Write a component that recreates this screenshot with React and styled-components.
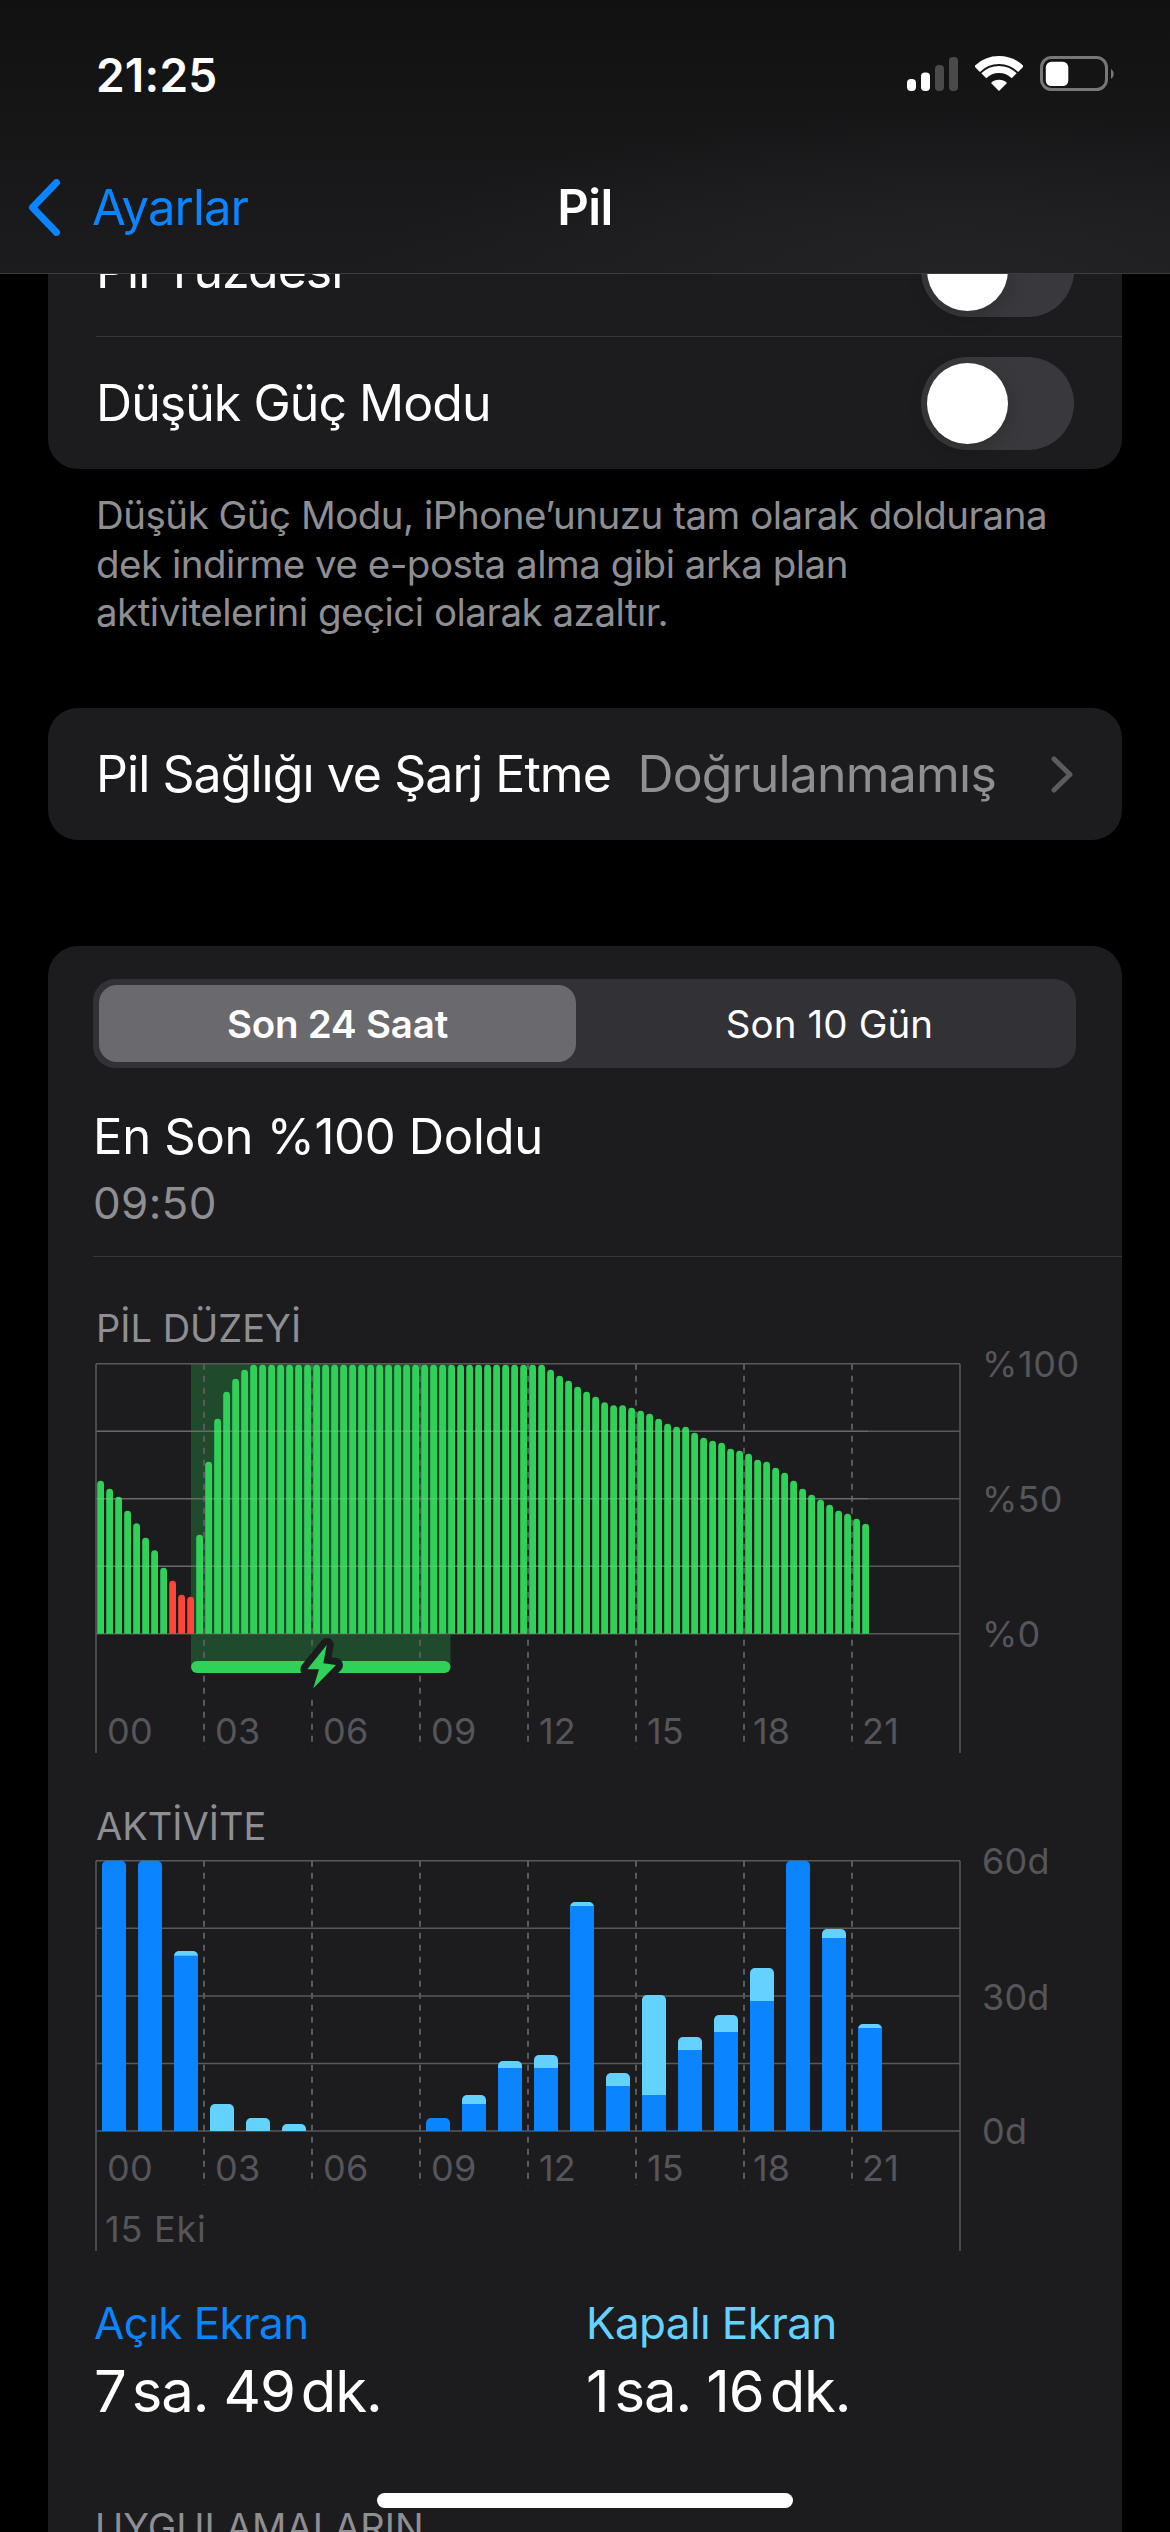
import React from "react";
import styled, { createGlobalStyle } from "styled-components";

const Global = createGlobalStyle`
  html, body { margin: 0; padding: 0; background: #000; }
  * { box-sizing: border-box; }
`;

const Screen = styled.div`
  position: relative;
  width: 1170px;
  height: 2532px;
  overflow: hidden;
  background: #000;
  color: #fff;
  font-family: Inter, "Liberation Sans", sans-serif;
`;

const Header = styled.header`
  position: absolute;
  top: 0;
  left: 0;
  right: 0;
  height: 274px;
  z-index: 2;
  display: flex;
  flex-direction: column;
  background: radial-gradient(600px 160px at 82% 100%, #232325 0%, rgba(35, 35, 37, 0) 100%),
    linear-gradient(180deg, #111112 0%, #1c1c1e 100%);
  border-bottom: 1px solid #3c3c3f;
`;

const StatusBar = styled.div`
  height: 149px;
  padding: 0 55px 0 96px;
  display: flex;
  align-items: center;
  justify-content: space-between;
`;

const Clock = styled.span`
  font-size: 46px;
  font-weight: 600;
  letter-spacing: 0.2px;
  line-height: 1;
`;

const StatusIcons = styled.div`
  display: flex;
  align-items: center;
  gap: 17px;
  margin-top: -2px;
`;

const NavRow = styled.nav`
  height: 116px;
  display: grid;
  grid-template-columns: 1fr auto 1fr;
  align-items: center;
`;

const Back = styled.div`
  display: flex;
  align-items: center;
  gap: 31px;
  padding-left: 28px;
  color: #0a84ff;
  font-size: 49px;
  letter-spacing: -0.9px;
`;

const NavTitle = styled.h1`
  margin: 0;
  font-size: 49px;
  font-weight: 600;
  letter-spacing: -0.6px;
`;

const Scroller = styled.main`
  padding: 204px 48px 0;
  display: flex;
  flex-direction: column;
`;

const Card = styled.section`
  background: #1c1c1e;
  border-radius: 30px;
`;

const RowText = styled.span`
  font-size: 50px;
  letter-spacing: -0.95px;
  line-height: 60px;
  white-space: nowrap;
`;

const ToggleRowBox = styled.div`
  height: ${(p) => p.$h}px;
  margin-left: 48px;
  padding-right: 48px;
  display: flex;
  align-items: center;
  justify-content: space-between;
  border-top: ${(p) => (p.$sep ? "1.5px solid #38383a" : "none")};
`;

const Toggle = styled.div`
  width: 153px;
  height: 93px;
  padding: 6px;
  border-radius: 47px;
  background: #39393d;
  display: flex;
  align-items: center;
`;

const Knob = styled.div`
  width: 81px;
  height: 81px;
  border-radius: 50%;
  background: #fff;
  box-shadow: 0 6px 20px rgba(0, 0, 0, 0.18);
`;

const Footnote = styled.p`
  margin: 22px 48px 0;
  font-size: 38.5px;
  line-height: 48.5px;
  letter-spacing: -0.5px;
  color: #8e8e93;
  white-space: nowrap;
`;

const HealthCard = styled(Card)`
  margin-top: 71.5px;
  height: 132px;
  padding: 0 49px 0 48px;
  display: flex;
  align-items: center;
  justify-content: space-between;
`;

const HealthEnd = styled.div`
  display: flex;
  align-items: center;
  gap: 55px;
`;

const HealthValue = styled(RowText)`
  color: #8e8e93;
  letter-spacing: -0.8px;
`;

const UsageCard = styled(Card)`
  margin-top: 106px;
  padding-top: 33px;
  border-radius: 30px 30px 0 0;
`;

const Segments = styled.div`
  margin: 0 46px 0 45px;
  height: 89px;
  padding: 6px;
  border-radius: 22px;
  background: #313136;
  display: grid;
  grid-template-columns: 477px 1fr;
  align-items: stretch;
`;

const Segment = styled.div`
  display: flex;
  align-items: center;
  justify-content: center;
  padding-left: ${(p) => (p.$active ? 0 : 13)}px;
  border-radius: 18px;
  font-size: 38.5px;
  letter-spacing: ${(p) => (p.$active ? "-0.2px" : "0.1px")};
  font-weight: ${(p) => (p.$active ? 600 : 400)};
  background: ${(p) => (p.$active ? "#69696e" : "transparent")};
`;

const LastCharge = styled.div`
  margin: 39px 0 0 45px;
  padding-bottom: 26px;
  border-bottom: 1.5px solid #38383a;
  display: flex;
  flex-direction: column;
`;

const LastChargeTitle = styled.span`
  font-size: 49px;
  line-height: 60px;
  letter-spacing: -0.3px;
`;

const LastChargeTime = styled.span`
  margin-top: 9px;
  font-size: 44px;
  line-height: 54px;
  letter-spacing: 0.3px;
  color: #8e8e93;
`;

const ChartTitle = styled.h2`
  margin: ${(p) => p.$top}px 0 0 48px;
  height: 56px;
  font-size: 38px;
  line-height: 56px;
  font-weight: 400;
  letter-spacing: 0;
  color: #8e8e93;
`;

const Plot = styled.svg`
  display: block;
  overflow: visible;
`;

const AxisLabel = styled.text`
  font-family: Inter, "Liberation Sans", sans-serif;
  font-size: 36px;
  fill: #55555a;
  letter-spacing: ${(p) => p.$spacing ?? 0.2}px;
`;

const Stats = styled.div`
  margin: 41px 0 0 46px;
  display: grid;
  grid-template-columns: 492px 1fr;
`;

const Stat = styled.div`
  display: flex;
  flex-direction: column;
  gap: 4px;
`;

const StatLabel = styled.span`
  font-size: 44px;
  line-height: 56px;
  letter-spacing: -0.6px;
  color: ${(p) => p.$color};
`;

const StatValue = styled.span`
  font-size: 58px;
  line-height: 72px;
  letter-spacing: -1.1px;
  white-space: nowrap;
`;

const Unit = styled.span`
  font-size: 58px;
  margin-left: ${(p) => p.$gap}px;
`;

const SectionRow = styled.div`
  margin: 76px 24px 0 47px;
  display: flex;
  align-items: flex-start;
  justify-content: space-between;
`;

const SectionTitle = styled.div`
  font-size: 38px;
  line-height: 48px;
  color: #8e8e93;
`;

const SectionAction = styled.div`
  margin-top: 29px;
  font-size: 38px;
  line-height: 48px;
  color: #0a84ff;
`;

const HomeIndicator = styled.div`
  position: absolute;
  left: 377px;
  top: 2493px;
  width: 416px;
  height: 15px;
  border-radius: 8px;
  background: #fff;
  z-index: 3;
`;

const SignalIcon = () => (
  <svg width="51" height="34" viewBox="0 0 51 34">
    <rect x="0" y="22" width="9" height="12" rx="4" fill="#fff" />
    <rect x="14" y="15.5" width="9" height="18.5" rx="4" fill="#fff" />
    <rect x="28" y="8" width="9" height="26" rx="4" fill="#4a4a4b" />
    <rect x="42" y="0" width="9" height="34" rx="4" fill="#4a4a4b" />
  </svg>
);

const WifiIcon = () => (
  <svg width="48" height="35" viewBox="0 0 48 35">
    <path d="M2.1 13.1A31 31 0 0 1 45.9 13.1" fill="none" stroke="#fff" strokeWidth="8" />
    <path d="M8.8 19.8A21.5 21.5 0 0 1 39.2 19.8" fill="none" stroke="#fff" strokeWidth="7" />
    <path d="M24 35L16 27A11.3 11.3 0 0 1 32 27Z" fill="#fff" />
  </svg>
);

const BatteryIcon = () => (
  <svg width="75" height="35" viewBox="0 0 75 35">
    <rect x="1.5" y="1.5" width="65" height="32" rx="10" fill="none" stroke="#777" strokeWidth="3" />
    <rect x="5.8" y="5.8" width="22.5" height="24.2" rx="5.5" fill="#fff" />
    <path d="M71 13A6 6 0 0 1 71 23Z" fill="#777" />
  </svg>
);

const BackChevron = () => (
  <svg width="33" height="57" viewBox="0 0 33 57">
    <path d="M28.5 3.5L4.5 28.5L28.5 53.5" fill="none" stroke="#0a84ff" strokeWidth="7" strokeLinecap="round" strokeLinejoin="round" />
  </svg>
);

const Disclosure = () => (
  <svg width="22" height="37" viewBox="0 0 22 37">
    <path d="M3 3L19 18.5L3 34" fill="none" stroke="#5c5c60" strokeWidth="5" strokeLinecap="round" strokeLinejoin="round" />
  </svg>
);

const GRID = "#59595c";
const DASHES = [204, 312, 420, 528, 636, 744, 852];

const levelTops = [
  542, 566, 590, 632, 670, 713, 751, 803, 842, 884, 890, 704, 485, 356, 275, 236, 209,
  ...Array(33).fill(194),
  209, 227, 242, 260, 275, 290, 307, 316, 316, 323, 332, 341, 356, 371, 380, 380, 398, 413,
  422, 428, 446, 452, 461, 479, 485, 503, 518, 542, 566, 584, 599, 614, 632, 641, 656, 671,
];

const activity = [
  [212, 212], [212, 212], [483, 497], [942, 1023], [984, 1023], [1002, 1023], null, null, null,
  [984, 984], [915, 942], [813, 834], [795, 834], [336, 348], [849, 888], [615, 915], [741, 780],
  [675, 726], [534, 633], [212, 212], [417, 444], [702, 714],
];

const topRounded = (x, w, top, base, r) =>
  `M${x} ${base}V${top + r}A${r} ${r} 0 0 1 ${x + r} ${top}H${x + w - r}A${r} ${r} 0 0 1 ${x + w} ${top + r}V${base}Z`;

const HOUR_LABELS = [
  ["00", 107], ["03", 215], ["06", 323], ["09", 431], ["12", 539], ["15", 647], ["18", 753], ["21", 862],
];

const GridLines = ({ top, step, axisEnd, dashEnd }) => (
  <g stroke={GRID} strokeWidth="1.5">
    {[0, 1, 2, 3, 4].map((i) => (
      <line key={i} x1="96" x2="960" y1={top + step * i} y2={top + step * i} />
    ))}
    <line x1="96" x2="96" y1={top} y2={axisEnd} />
    <line x1="960" x2="960" y1={top} y2={axisEnd} />
    {DASHES.map((x) => (
      <line key={x} x1={x} x2={x} y1={top} y2={dashEnd} strokeWidth="2" strokeDasharray="6 6" />
    ))}
  </g>
);

const BOLT = "M326.7 1645L307.3 1669.3L319 1669.3L313.3 1688.3L336 1665L323.3 1663.3Z";

const LevelChart = () => {
  const base = 1633.7;
  return (
    <Plot width="1074" height="404" viewBox="48 1356 1074 404">
      <rect x="191" y="1364" width="259.5" height="303" fill="#204a2c" />
      <GridLines top={1363.7} step={67.5} axisEnd={1753} dashEnd={1748} />
      {levelTops.map((t, i) => (
        <path
          key={i}
          d={topRounded(97.2 + 9 * i, 6.8, 1300 + t / 3, base, 3.4)}
          fill={i >= 8 && i <= 10 ? "#ff453a" : "#30d158"}
        />
      ))}
      <g stroke="#fff" strokeOpacity="0.1" strokeWidth="1.5">
        {[1431.2, 1498.7, 1566.2].map((y) => (
          <line key={y} x1="97" x2="868" y1={y} y2={y} />
        ))}
      </g>
      <rect x="191" y="1661" width="259.5" height="12" rx="6" fill="#30d158" />
      <path d={BOLT} fill="#1c1c1e" stroke="#1c1c1e" strokeWidth="14" strokeLinejoin="round" />
      <path d={BOLT} fill="#30d158" />
      {HOUR_LABELS.map(([t, x]) => (
        <AxisLabel key={t} x={x} y="1744">{t}</AxisLabel>
      ))}
      <AxisLabel x="982" y="1376.5" $spacing={0.6}>%100</AxisLabel>
      <AxisLabel x="982" y="1512">%50</AxisLabel>
      <AxisLabel x="982" y="1647">%0</AxisLabel>
    </Plot>
  );
};

const ActivityChart = () => {
  const base = 2131;
  return (
    <Plot width="1074" height="400" viewBox="48 1854 1074 400">
      <GridLines top={1860.7} step={67.6} axisEnd={2251} dashEnd={2185} />
      {activity.map((b, i) => {
        if (!b) return null;
        const x = 102 + 36 * i;
        const top = 1790 + b[0] / 3;
        const split = 1790 + b[1] / 3;
        const solidBlue = b[0] === b[1];
        const lightOnly = b[1] === 1023;
        return (
          <g key={i}>
            <path d={topRounded(x, 24, top, base, 5)} fill={solidBlue ? "#0a84ff" : "#64d2ff"} />
            {!solidBlue && !lightOnly && <rect x={x} y={split} width="24" height={base - split} fill="#0a84ff" />}
          </g>
        );
      })}
      {HOUR_LABELS.map(([t, x]) => (
        <AxisLabel key={t} x={x} y="2181">{t}</AxisLabel>
      ))}
      <AxisLabel x="105" y="2242" $spacing={0.8}>15 Eki</AxisLabel>
      <AxisLabel x="982" y="1874">60d</AxisLabel>
      <AxisLabel x="982" y="2009.5">30d</AxisLabel>
      <AxisLabel x="982" y="2144">0d</AxisLabel>
    </Plot>
  );
};

export default function App() {
  return (
    <Screen>
      <Global />
      <Header>
        <StatusBar>
          <Clock>21:25</Clock>
          <StatusIcons>
            <SignalIcon />
            <WifiIcon />
            <BatteryIcon />
          </StatusIcons>
        </StatusBar>
        <NavRow>
          <Back>
            <BackChevron />
            <span>Ayarlar</span>
          </Back>
          <NavTitle>Pil</NavTitle>
          <span />
        </NavRow>
      </Header>

      <Scroller>
        <Card>
          <ToggleRowBox $h={132}>
            <RowText>Pil Yüzdesi</RowText>
            <Toggle><Knob /></Toggle>
          </ToggleRowBox>
          <ToggleRowBox $h={133} $sep>
            <RowText>Düşük Güç Modu</RowText>
            <Toggle><Knob /></Toggle>
          </ToggleRowBox>
        </Card>
        <Footnote>
          Düşük Güç Modu, iPhone’unuzu tam olarak doldurana
          <br />
          dek indirme ve e-posta alma gibi arka plan
          <br />
          aktivitelerini geçici olarak azaltır.
        </Footnote>
        <HealthCard>
          <RowText>Pil Sağlığı ve Şarj Etme</RowText>
          <HealthEnd>
            <HealthValue>Doğrulanmamış</HealthValue>
            <Disclosure />
          </HealthEnd>
        </HealthCard>
        <UsageCard>
          <Segments>
            <Segment $active>Son 24 Saat</Segment>
            <Segment>Son 10 Gün</Segment>
          </Segments>
          <LastCharge>
            <LastChargeTitle>En Son %100 Doldu</LastChargeTitle>
            <LastChargeTime>09:50</LastChargeTime>
          </LastCharge>
          <ChartTitle $top={42.5}>PİL DÜZEYİ</ChartTitle>
          <LevelChart />
          <ChartTitle $top={38}>AKTİVİTE</ChartTitle>
          <ActivityChart />
          <Stats>
            <Stat>
              <StatLabel $color="#0a84ff">Açık Ekran</StatLabel>
              <StatValue>7<Unit $gap={6}>sa.</Unit> 49<Unit $gap={6}>dk.</Unit></StatValue>
            </Stat>
            <Stat>
              <StatLabel $color="#64d2ff">Kapalı Ekran</StatLabel>
              <StatValue>1<Unit $gap={6}>sa.</Unit> 16<Unit $gap={6}>dk.</Unit></StatValue>
            </Stat>
          </Stats>
          <SectionRow>
            <SectionTitle>UYGULAMALARIN<br />PİL KULLANIMI</SectionTitle>
            <SectionAction>AKTİVİTEYİ GÖSTER</SectionAction>
          </SectionRow>
        </UsageCard>
      </Scroller>
      <HomeIndicator />
    </Screen>
  );
}
